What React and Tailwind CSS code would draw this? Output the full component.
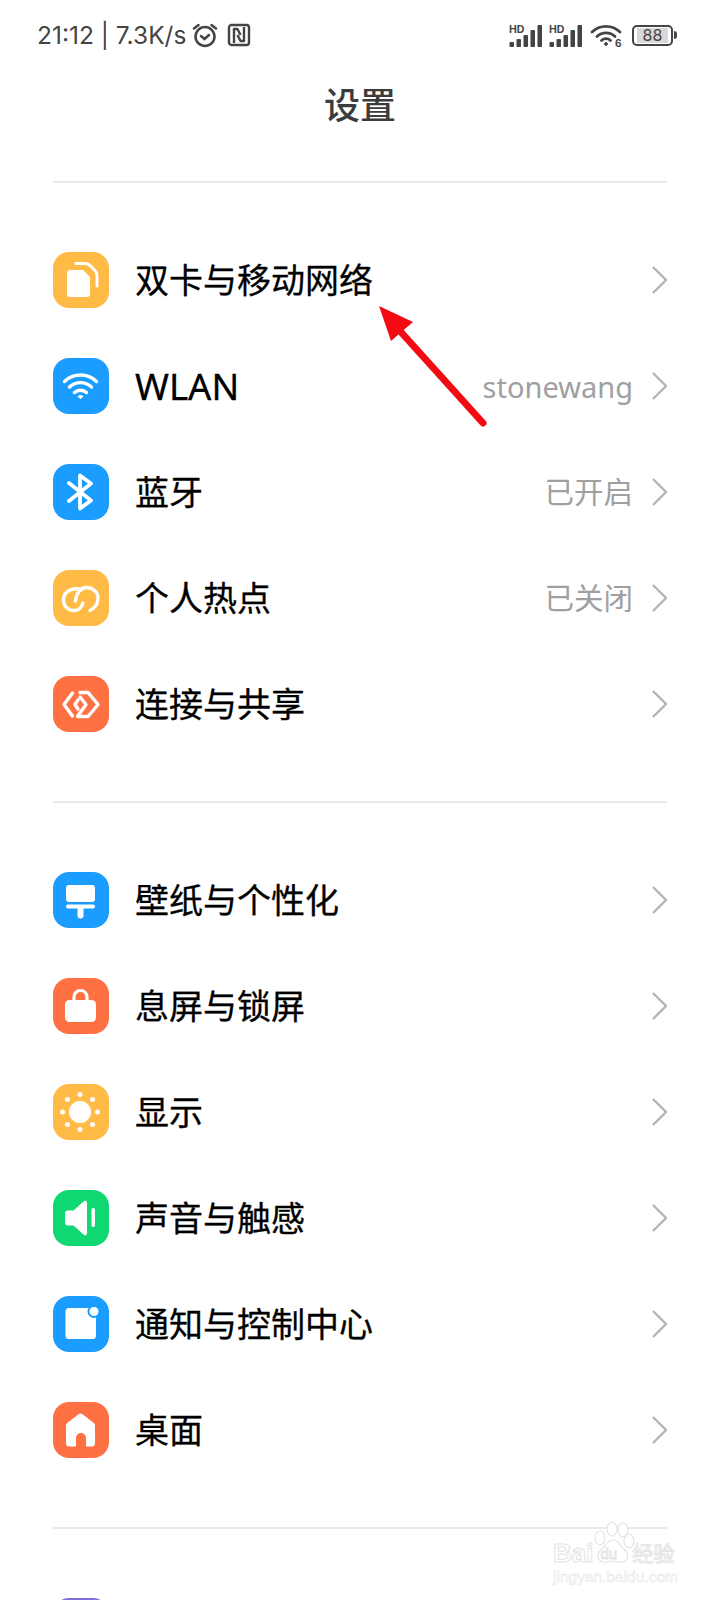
import React from "react";

const ICONS = {
  sim: (
    <>
      <path d="M17 18h13l7 7v17a3 3 0 0 1-3 3H17a3 3 0 0 1-3-3V21a3 3 0 0 1 3-3z" fill="#fff" />
      <path d="M23 11.500h9q3 0 5 2l5 5q2 2 2 5V34" fill="none" stroke="#fff" strokeWidth="3" strokeLinecap="round" />
    </>
  ),
  wifi: (
    <g fill="none" stroke="#fff" strokeWidth="3.400" strokeLinecap="round">
      <path d="M11.500 23.500a23 23 0 0 1 32 0" />
      <path d="M16.500 29a16 16 0 0 1 22 0" />
      <path d="M21.500 34.500a9 9 0 0 1 12 0" />
      <path d="M27.500 41l-3-2.600a4.500 4.500 0 0 1 6 0z" fill="#fff" stroke="none" />
    </g>
  ),
  bluetooth: (
    <path d="M16 19l22 17.500-11 8V11.500l11 8L16 37" fill="none" stroke="#fff" strokeWidth="3.800" strokeLinecap="round" strokeLinejoin="round" />
  ),
  hotspot: (
    <g fill="none" stroke="#fff" strokeWidth="3.400" strokeLinecap="round">
      <path d="M29 19.500C18 17 10.500 22 10.500 30C10.500 38 18 42 24 40C27 39 29 36 30 33" />
      <path d="M22.500 31C23 23 28 17.500 33 17.500C40 17.500 45 22 45 28C45 34 42 38 37 40.500" />
    </g>
  ),
  share: (
    <g fill="none" stroke="#fff" strokeWidth="3.400" strokeLinecap="round" strokeLinejoin="round">
      <path d="M19.500 17L11 28.500L19.500 40" />
      <path d="M25 24l-3 4.500 3 4.500" />
      <path d="M27 16.500h8l10 12-10 12H24.500l8.500-12-6-7.500" />
    </g>
  ),
  paint: (
    <>
      <rect x="13" y="13" width="29" height="17" rx="3" fill="#fff" />
      <rect x="13" y="32.500" width="29" height="4" rx="2" fill="#fff" />
      <path d="M24.500 36h6v7.500a3 3 0 0 1-6 0z" fill="#fff" />
    </>
  ),
  lock: (
    <>
      <path d="M21 24v-5a6.500 6.500 0 0 1 13 0v5" fill="none" stroke="#fff" strokeWidth="3.200" />
      <rect x="12" y="22" width="31" height="22" rx="4.500" fill="#fff" />
    </>
  ),
  sun: (
    <g fill="#fff">
      <circle cx="27" cy="28" r="11" />
      <circle cx="27" cy="10.500" r="2.500" />
      <circle cx="27" cy="45.500" r="2.500" />
      <circle cx="9.500" cy="28" r="2.500" />
      <circle cx="44.500" cy="28" r="2.500" />
      <circle cx="14.600" cy="15.600" r="2.500" />
      <circle cx="39.400" cy="15.600" r="2.500" />
      <circle cx="14.600" cy="40.400" r="2.500" />
      <circle cx="39.400" cy="40.400" r="2.500" />
    </g>
  ),
  sound: (
    <>
      <path d="M15 20.500h5.500L30.500 11.500q3.500-2.500 3.500 2v29q0 4.500-3.500 2L20.500 35.500H15a3 3 0 0 1-3-3v-9a3 3 0 0 1 3-3z" fill="#fff" />
      <rect x="38.500" y="18" width="3.500" height="19" rx="1.700" fill="#fff" />
    </>
  ),
  notify: (
    <>
      <rect x="12.500" y="12" width="30.500" height="31" rx="3.500" fill="#fff" />
      <circle cx="41" cy="15.500" r="6.500" fill="#1a9dff" />
      <circle cx="41" cy="15.500" r="4.500" fill="#fff" />
    </>
  ),
  home: (
    <path d="M25.500 12.200a3.500 3.500 0 0 1 4 0l11 8.500a3.500 3.500 0 0 1 1.500 3V41a3.500 3.500 0 0 1-3.500 3.500H33V36a5 5 0 0 0-10 0v8.500h-6.500A3.500 3.500 0 0 1 13 41V23.700a3.500 3.500 0 0 1 1.500-3z" fill="#fff" />
  ),
};

const groupOne = [
  { label: "双卡与移动网络", icon: "sim", color: "bg-[#ffbb45]" },
  { label: "WLAN", icon: "wifi", color: "bg-[#1a9dff]", value: "stonewang" },
  { label: "蓝牙", icon: "bluetooth", color: "bg-[#1a9dff]", value: "已开启" },
  { label: "个人热点", icon: "hotspot", color: "bg-[#ffbb45]", value: "已关闭" },
  { label: "连接与共享", icon: "share", color: "bg-[#ff7043]" },
];

const groupTwo = [
  { label: "壁纸与个性化", icon: "paint", color: "bg-[#1a9dff]" },
  { label: "息屏与锁屏", icon: "lock", color: "bg-[#ff7043]" },
  { label: "显示", icon: "sun", color: "bg-[#ffbb45]" },
  { label: "声音与触感", icon: "sound", color: "bg-[#0fd872]" },
  { label: "通知与控制中心", icon: "notify", color: "bg-[#1a9dff]" },
  { label: "桌面", icon: "home", color: "bg-[#ff7043]" },
];

const Signal = () => (
  <svg width="33" height="23" viewBox="0 0 33 23" className="shrink-0">
    <text x="0" y="9" fontSize="10.500" fontWeight="700" fill="#444" fontFamily="Inter, sans-serif">HD</text>
    <g fill="#444">
      <rect x="0.500" y="18" width="4.500" height="5" rx="1" />
      <rect x="7.500" y="15" width="4.500" height="8" rx="1" />
      <rect x="14.500" y="11" width="4.500" height="12" rx="1" />
      <rect x="21.500" y="6" width="4.500" height="17" rx="1" />
      <rect x="28.500" y="1" width="4.500" height="22" rx="1" />
    </g>
  </svg>
);

const Row = ({ label, icon, color, value }) => (
  <div className="flex h-[106px] items-center">
    <div className={`size-[56px] shrink-0 rounded-[16px] ${color}`}>
      <svg viewBox="0 0 56 56" className="size-[56px]">{ICONS[icon]}</svg>
    </div>
    <span className={`ml-[26px] leading-none text-black [-webkit-text-stroke:0.300px_#000] ${label === "WLAN" ? "text-[36.500px]" : "text-[34px]"}`}>{label}</span>
    <span className={`ml-auto leading-none text-[#a0a0a0] ${value === "stonewang" ? "text-[29px]" : "text-[29.500px]"}`}>{value}</span>
    <svg width="16" height="30" viewBox="0 0 16 30" className="ml-[18px] shrink-0">
      <path d="M2 2l13 13L2 28" fill="none" stroke="#b4b4b4" strokeWidth="2.400" />
    </svg>
  </div>
);

const Divider = () => <div className="h-[2px] bg-[#e8e8e8]" />;

export default function App() {
  return (
    <div className="relative h-[1600px] overflow-hidden bg-white font-['Noto_Sans','Noto_Sans_CJK_SC',sans-serif]">
      {/* status bar */}
      <div className="flex h-[70px] items-center pl-[37px] pr-[43px] text-[#444]">
        <span className="font-['Inter','Noto_Sans',sans-serif] text-[24.500px] leading-none">21:12 | 7.3K/s</span>
        <svg width="26" height="26" viewBox="0 0 26 26" className="ml-[6px] shrink-0" fill="none" stroke="#444" strokeWidth="2.500" strokeLinecap="round">
          <circle cx="13" cy="14.500" r="9.500" />
          <path d="M9 14l3.500 3L17 13" />
          <path d="M2 6.500L6.500 3M24 6.500L19.500 3" />
        </svg>
        <svg width="24" height="24" viewBox="0 0 24 24" className="ml-[9px] shrink-0" fill="none" stroke="#444" strokeWidth="2.400" strokeLinejoin="round">
          <rect x="2" y="2" width="20" height="20" rx="2.500" />
          <path d="M7 20V6h3.500l3 6M17 4v14h-3.500l-3-6" />
        </svg>
        <div className="ml-auto flex items-center">
          <Signal />
          <div className="ml-[7px]"><Signal /></div>
          <svg width="32" height="24" viewBox="0 0 32 24" className="ml-[8px] shrink-0" fill="none" stroke="#444" strokeWidth="2.800" strokeLinecap="round">
            <path d="M2 9a20 20 0 0 1 28 0" />
            <path d="M7 13.500a13 13 0 0 1 18 0" />
            <path d="M11.500 17.500a6.500 6.500 0 0 1 9 0" />
            <circle cx="16" cy="21" r="1.400" fill="#444" strokeWidth="1" />
            <text x="25" y="23.500" fontSize="10" fontWeight="700" fill="#444" stroke="none" fontFamily="Inter, sans-serif">6</text>
          </svg>
          <div className="ml-[10px] flex h-[21px] w-[41px] shrink-0 items-center rounded-[5px] border-2 border-[#444] px-[3px]">
            <div className="flex h-[15px] flex-1 items-center justify-center bg-[#d8d8d8] font-['Inter',sans-serif] text-[16px] leading-none text-[#444]">88</div>
          </div>
          <div className="ml-[1px] h-[8px] w-[3px] shrink-0 rounded-r-sm bg-[#444]" />
        </div>
      </div>

      {/* title */}
      <div className="flex h-[72px] items-center justify-center text-[36px] font-medium leading-none text-[#3c3c3c]">设置</div>

      <div className="px-[53px] pt-[39px]">
        <Divider />
        <div className="py-[44px]">
          {groupOne.map((row) => <Row key={row.label} {...row} />)}
        </div>
        <Divider />
        <div className="py-[44px]">
          {groupTwo.map((row) => <Row key={row.label} {...row} />)}
        </div>
        <Divider />
        <div className="mt-[69px] size-[56px] rounded-[16px] bg-[#7c6fd8]" />
      </div>

      {/* red annotation arrow */}
      <svg width="720" height="500" viewBox="0 0 720 500" className="absolute left-0 top-0">
        <path d="M400 331L483 423" stroke="#f40a12" strokeWidth="7" strokeLinecap="round" />
        <path d="M379 306L413 322L391 341z" fill="#f40a12" />
      </svg>

      {/* baidu watermark */}
      <div className="absolute left-[553px] top-[1521px] w-[130px]">
        <svg width="60" height="50" viewBox="0 0 60 50" className="absolute left-[30px] top-0" fill="#fff" stroke="#e4e4e4" strokeWidth="1.200">
          <ellipse cx="29" cy="8" rx="5" ry="7" />
          <ellipse cx="40" cy="9" rx="5" ry="7" />
          <ellipse cx="17" cy="17" rx="5" ry="7" />
          <ellipse cx="46" cy="20" rx="5" ry="7" />
          <path d="M30 19c6 0 7 6 12 10 4 4 4 11-3 12-4 1-6-1-9-1s-6 2-10 1c-7-2-6-9-2-12 5-4 6-10 12-10z" />
        </svg>
        <div className="relative mt-[20px] flex h-[24px] items-center text-transparent [-webkit-text-stroke:1px_#e4e4e4]">
          <span className="font-['Liberation_Sans',sans-serif] text-[26px] font-bold leading-none">Bai</span>
          <span className="ml-[7px] font-['Liberation_Sans',sans-serif] text-[15px] leading-none">du</span>
          <span className="ml-[15px] text-[21px] leading-none">经验</span>
        </div>
        <div className="relative mt-[3px] font-['Liberation_Sans',sans-serif] text-[15.500px] leading-[18px] text-transparent [-webkit-text-stroke:0.500px_#e4e4e4]">jingyan.baidu.com</div>
      </div>
    </div>
  );
}
